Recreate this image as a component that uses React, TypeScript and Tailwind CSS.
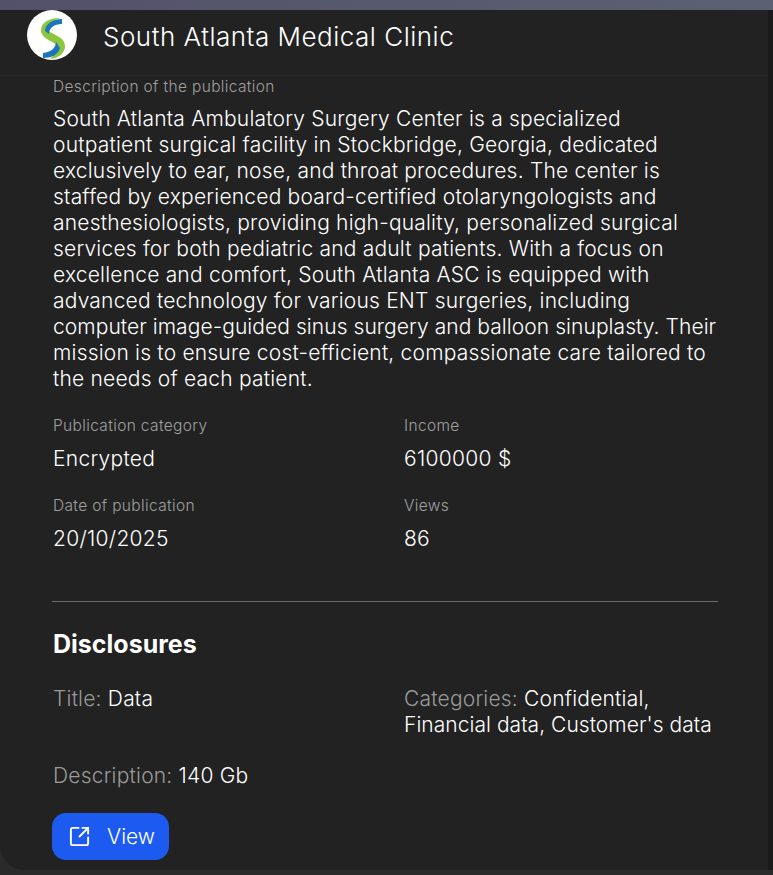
import { SquareArrowOutUpRight } from "lucide-react";

const descriptionLines = [
  "South Atlanta Ambulatory Surgery Center is a specialized",
  "outpatient surgical facility in Stockbridge, Georgia, dedicated",
  "exclusively to ear, nose, and throat procedures. The center is",
  "staffed by experienced board-certified otolaryngologists and",
  "anesthesiologists, providing high-quality, personalized surgical",
  "services for both pediatric and adult patients. With a focus on",
  "excellence and comfort, South Atlanta ASC is equipped with",
  "advanced technology for various ENT surgeries, including",
];

function Logo() {
  return (
    <div className="w-[50px] h-[50px] rounded-full bg-white shrink-0 overflow-hidden">
      <svg viewBox="0 0 50 50" className="w-full h-full">
        <path d="M33 8C23 8 14 12 14 20C14 27 22 30 27 33C31 36 31 42 23 49C33 48 38 42 38 36C38 28 28 25 23 22C19 19 21 13 33 8Z" fill="#8cc63f" />
        <path d="M35 9C26 9 18 14 18 21L22 24C22 18 27 14 35 14Z" fill="#1b75bc" />
        <path d="M16 43L16 48C24 48 31 45 33 38L29 32C29 38 24 42 16 43Z" fill="#1b75bc" />
      </svg>
    </div>
  );
}

function Field({ label, value }: { label: string; value: string }) {
  return (
    <div className="flex flex-col gap-[10px]">
      <div className="text-[15.5px] leading-5 tracking-[0.35px] text-[#a0a0a0]">{label}</div>
      <div className="text-[21px] leading-[26px] tracking-[0.28px] text-white">{value}</div>
    </div>
  );
}

export default function App() {
  return (
    <div className="h-[875px] w-[773px] overflow-hidden bg-[#2a2a2a] font-['Inter',sans-serif] font-light">
      <div className="h-[10px] bg-gradient-to-r from-[#53506a] to-[#5a6272]" />
      <div className="flex h-[865px] items-start bg-[#2a2a2a]">
        <div className="h-[860px] w-[768px] rounded-bl-[24px] bg-[#222222]">
          <div className="flex h-[66px] items-start gap-[26px] border-b border-[#2b2b2b] pl-[27px]">
            <Logo />
            <h1 className="mt-[10px] text-[26px] leading-[34px] tracking-[0.5px] text-white">South Atlanta Medical Clinic</h1>
          </div>
          <div className="pl-[53px] pr-[50px]">
            <div className="pt-px text-[15.5px] leading-5 tracking-[0.35px] text-[#a0a0a0]">Description of the publication</div>
            <p className="mt-[9px] whitespace-nowrap text-[21px] leading-[26px] tracking-[0.2px] text-white">
              {descriptionLines.map((line) => (
                <span key={line} className="block">{line}</span>
              ))}
              <span className="block tracking-[0.06px]">computer image-guided sinus surgery and balloon sinuplasty. Their</span>
              <span className="block">mission is to ensure cost-efficient, compassionate care tailored to</span>
              <span className="block">the needs of each patient.</span>
            </p>
            <div className="mt-[24px] grid grid-cols-[351px_1fr] gap-y-[24px]">
              <Field label="Publication category" value="Encrypted" />
              <Field label="Income" value="6100000 $" />
              <Field label="Date of publication" value="20/10/2025" />
              <Field label="Views" value="86" />
            </div>
            <div className="-ml-px mt-[49px] h-px bg-[#6a6a6a]" />
            <h2 className="mt-[26px] text-[25px] font-bold leading-8 text-white">Disclosures</h2>
            <div className="mt-[26px] grid grid-cols-[351px_1fr] text-[21px] leading-[26px] tracking-[0.2px]">
              <div><span className="text-[#9a9a9a]">Title: </span><span className="text-white">Data</span></div>
              <div className="whitespace-nowrap">
                <span className="text-[#9a9a9a]">Categories: </span><span className="text-white">Confidential,</span>
                <span className="block tracking-[0.04px] text-white">Financial data, Customer's data</span>
              </div>
            </div>
            <div className="mt-[25px] text-[21px] leading-[26px] tracking-[0.2px]">
              <span className="text-[#9a9a9a]">Description: </span><span className="text-white">140 Gb</span>
            </div>
            <button className="-ml-px mt-[24px] flex h-[47px] w-[117px] items-center gap-[16px] rounded-[14px] bg-[#1d5af0] pl-[16px] text-[21px] text-white">
              <SquareArrowOutUpRight size={23} strokeWidth={2} />
              View
            </button>
          </div>
        </div>
        <div className="h-[860px] w-[5px] bg-[#1a1a1a]" />
      </div>
    </div>
  );
}
